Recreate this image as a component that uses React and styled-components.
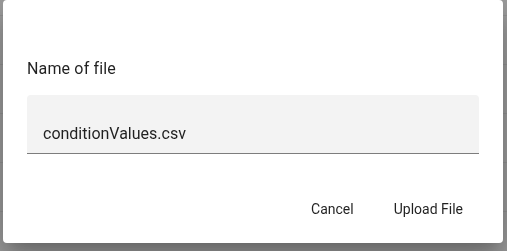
import React from 'react'
import styled, { createGlobalStyle } from 'styled-components'

const Global = createGlobalStyle`
  html, body {
    margin: 0;
    padding: 0;
    height: 100%;
    overflow: hidden;
  }
  body {
    font-family: Roboto, 'Liberation Sans', sans-serif;
    background: #9d9d9d;
  }
`

const Backdrop = styled.div`
  height: 100vh;
  display: flex;
  flex-direction: column;
  padding-top: 15px;
  box-sizing: border-box;
`

const BackRow = styled.div`
  height: 49px;
  flex-shrink: 0;
  border-top: 1px solid #929292;
  box-sizing: border-box;
`

const Dialog = styled.div`
  position: fixed;
  top: 0;
  left: 3px;
  width: 500px;
  height: 243px;
  box-sizing: border-box;
  background: #fff;
  border-radius: 4px;
  box-shadow: 0px 11px 15px -7px rgba(0, 0, 0, 0.2),
    0px 24px 38px 3px rgba(0, 0, 0, 0.14), 0px 9px 46px 8px rgba(0, 0, 0, 0.12);
  display: flex;
  flex-direction: column;
`

const Content = styled.div`
  padding: 57px 24px 0;
  display: flex;
  flex-direction: column;
`

const Label = styled.div`
  font-size: 16px;
  line-height: 24px;
  color: rgba(0, 0, 0, 0.87);
  letter-spacing: 0.15px;
  margin-bottom: 14px;
`

const Field = styled.div`
  height: 59px;
  box-sizing: border-box;
  background: #f3f3f3;
  border-radius: 4px 4px 0 0;
  border-bottom: 1px solid #7d7d7d;
  padding: 29px 16px 0;
  font-size: 16px;
  line-height: 19px;
  color: rgba(0, 0, 0, 0.87);
`

const Actions = styled.div`
  margin-top: auto;
  padding: 0 24px 16px;
  display: flex;
  justify-content: flex-end;
  gap: 8px;
`

const Button = styled.button`
  height: 36px;
  padding: 0 16px;
  border: none;
  background: transparent;
  font-family: Roboto, 'Liberation Sans', sans-serif;
  font-size: 14px;
  color: rgba(0, 0, 0, 0.87);
  letter-spacing: 0;
  cursor: pointer;
`

export default function App() {
  return (
    <>
      <Global />
      <Backdrop>
        {[0, 1, 2, 3, 4].map((i) => (
          <BackRow key={i} />
        ))}
      </Backdrop>
      <Dialog>
        <Content>
          <Label>Name of file</Label>
          <Field>conditionValues.csv</Field>
        </Content>
        <Actions>
          <Button>Cancel</Button>
          <Button>Upload File</Button>
        </Actions>
      </Dialog>
    </>
  )
}
